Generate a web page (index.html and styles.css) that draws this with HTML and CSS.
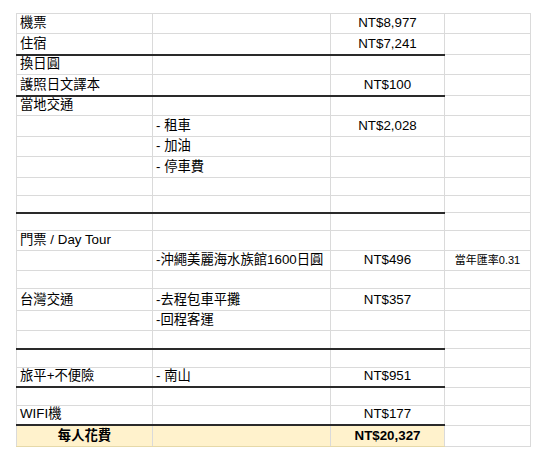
FILE: index.html
```html
<!DOCTYPE html>
<html lang="zh-Hant">
<head>
<meta charset="utf-8">
<link rel="stylesheet" href="styles.css">
</head>
<body>
<table class="sheet">
  <colgroup><col class="w1"><col class="w2"><col class="w3"><col class="w4"></colgroup>
  <tr class="h20"><td>機票</td><td></td><td class="num">NT$8,977</td><td></td></tr>
  <tr class="h21 thick"><td>住宿</td><td></td><td class="num">NT$7,241</td><td></td></tr>
  <tr class="h20"><td>換日圓</td><td></td><td class="num"></td><td></td></tr>
  <tr class="h21 thick"><td>護照日文譯本</td><td></td><td class="num">NT$100</td><td></td></tr>
  <tr class="h20"><td>當地交通</td><td></td><td class="num"></td><td></td></tr>
  <tr class="h21"><td></td><td>- 租車</td><td class="num">NT$2,028</td><td></td></tr>
  <tr class="h20"><td></td><td>- 加油</td><td class="num"></td><td></td></tr>
  <tr class="h21"><td></td><td>- 停車費</td><td class="num"></td><td></td></tr>
  <tr class="h18"><td></td><td></td><td class="num"></td><td></td></tr>
  <tr class="h17 thick"><td></td><td></td><td class="num"></td><td></td></tr>
  <tr class="h18"><td></td><td></td><td class="num"></td><td></td></tr>
  <tr class="h20"><td>門票 / Day Tour</td><td></td><td class="num"></td><td></td></tr>
  <tr class="h20"><td></td><td>-沖繩美麗海水族館1600日圓</td><td class="num">NT$496</td><td class="note">當年匯率0.31</td></tr>
  <tr class="h18"><td></td><td></td><td class="num"></td><td></td></tr>
  <tr class="h22"><td>台灣交通</td><td>-去程包車平攤</td><td class="num">NT$357</td><td></td></tr>
  <tr class="h20"><td></td><td>-回程客運</td><td class="num"></td><td></td></tr>
  <tr class="h18 thick"><td></td><td></td><td class="num"></td><td></td></tr>
  <tr class="h19"><td></td><td></td><td class="num"></td><td></td></tr>
  <tr class="h19 thick"><td>旅平+不便險</td><td>- 南山</td><td class="num">NT$951</td><td></td></tr>
  <tr class="h18"><td></td><td></td><td class="num"></td><td></td></tr>
  <tr class="h20 thick"><td>WIFI機</td><td></td><td class="num">NT$177</td><td></td></tr>
  <tr class="h21 total"><td class="center">每人花費</td><td></td><td class="num">NT$20,327</td><td></td></tr>
</table>
</body>
</html>
```
FILE: styles.css
```css
html, body {
  margin: 0;
  background: #ffffff;
}
body {
  padding: 13px 0 0 16px;
  font-family: "Liberation Sans", Arial, "Noto Sans CJK TC", sans-serif;
  font-size: 13.333px;
  color: #000000;
}
.sheet {
  border-collapse: collapse;
  table-layout: fixed;
}
.w1 { width: 136px; }
.w2 { width: 178px; }
.w3 { width: 114px; }
.w4 { width: 86px; }
.sheet td {
  box-sizing: border-box;
  border: 1px solid #dadada;
  padding: 0 3px 2px 3px;
  line-height: 16px;
  vertical-align: bottom;
  white-space: nowrap;
  overflow: hidden;
}
.h17 td { height: 17px; }
.h18 td { height: 18px; }
.h19 td { height: 19px; }
.h20 td { height: 20px; }
.h21 td { height: 21px; }
.h22 td { height: 22px; }
.sheet tr.thick td:not(:last-child) {
  border-bottom: 2px solid #2a2a2a;
}
.num { text-align: center; }
.center { text-align: center; }
.note {
  text-align: center;
  font-size: 11px;
  padding-bottom: 1px;
}
.total td:not(:last-child) {
  background: #fff2cc;
  font-weight: bold;
  border-bottom-color: #e6d9a8;
}
```
